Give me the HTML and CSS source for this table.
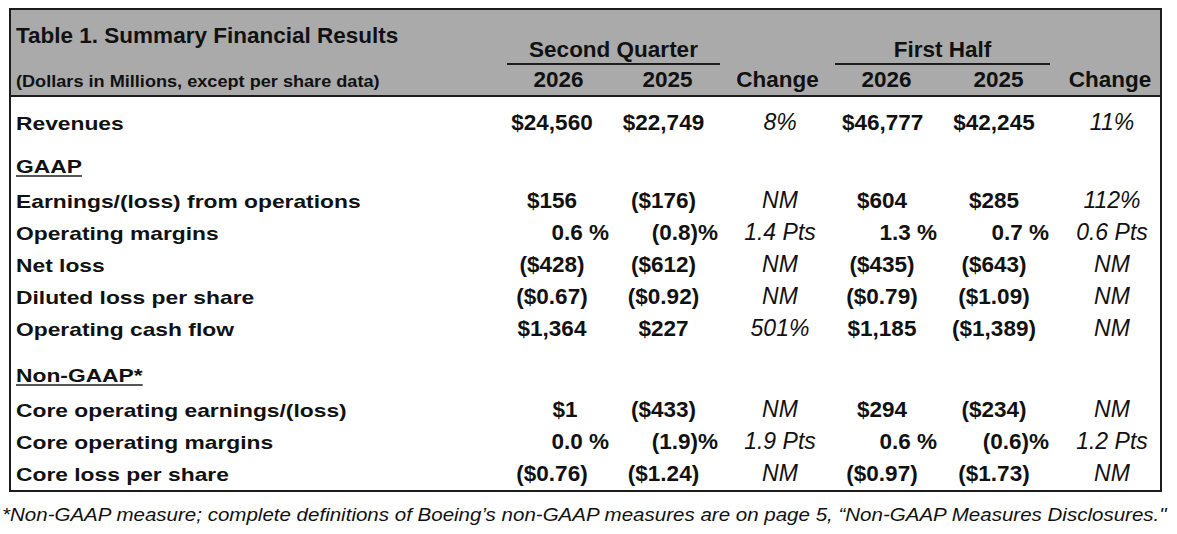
FILE: index.html
```html
<!DOCTYPE html>
<html lang="en">
<head>
<meta charset="utf-8">
<title>Table 1. Summary Financial Results</title>
<link rel="stylesheet" href="styles.css">
</head>
<body>
<div class="page">
  <div class="tbl">
    <div class="head">
      <div class="hrow1">
        <div class="title">Table 1. Summary Financial Results</div>
        <div class="group q">Second Quarter</div>
        <div class="group h">First Half</div>
      </div>
      <div class="hrow2">
        <div class="sub"><span class="stretch-s">(Dollars in Millions, except per share data)</span></div>
        <div>2026</div>
        <div>2025</div>
        <div>Change</div>
        <div>2026</div>
        <div>2025</div>
        <div>Change</div>
      </div>
    </div>
    <div class="body">
      <div class="r first">
        <div class="lbl"><span class="stretch">Revenues</span></div>
        <div class="v">$24,560</div><div class="v">$22,749</div><div class="c">8%</div>
        <div class="v">$46,777</div><div class="v">$42,245</div><div class="c">11%</div>
      </div>
      <div class="r sect">
        <div class="lbl"><span class="stretch u">GAAP</span></div>
      </div>
      <div class="r">
        <div class="lbl"><span class="stretch">Earnings/(loss) from operations</span></div>
        <div class="v">$156</div><div class="v">($176)</div><div class="c">NM</div>
        <div class="v">$604</div><div class="v">$285</div><div class="c">112%</div>
      </div>
      <div class="r">
        <div class="lbl"><span class="stretch">Operating margins</span></div>
        <div class="p">0.6 %</div><div class="p">(0.8)%</div><div class="c">1.4 Pts</div>
        <div class="p">1.3 %</div><div class="p">0.7 %</div><div class="c">0.6 Pts</div>
      </div>
      <div class="r">
        <div class="lbl"><span class="stretch">Net loss</span></div>
        <div class="v">($428)</div><div class="v">($612)</div><div class="c">NM</div>
        <div class="v">($435)</div><div class="v">($643)</div><div class="c">NM</div>
      </div>
      <div class="r">
        <div class="lbl"><span class="stretch">Diluted loss per share</span></div>
        <div class="v">($0.67)</div><div class="v">($0.92)</div><div class="c">NM</div>
        <div class="v">($0.79)</div><div class="v">($1.09)</div><div class="c">NM</div>
      </div>
      <div class="r">
        <div class="lbl"><span class="stretch">Operating cash flow</span></div>
        <div class="v">$1,364</div><div class="v">$227</div><div class="c">501%</div>
        <div class="v">$1,185</div><div class="v">($1,389)</div><div class="c">NM</div>
      </div>
      <div class="r sect2">
        <div class="lbl"><span class="stretch u">Non-GAAP*</span></div>
      </div>
      <div class="r">
        <div class="lbl"><span class="stretch">Core operating earnings/(loss)</span></div>
        <div class="v one">$1</div><div class="v">($433)</div><div class="c">NM</div>
        <div class="v">$294</div><div class="v">($234)</div><div class="c">NM</div>
      </div>
      <div class="r">
        <div class="lbl"><span class="stretch">Core operating margins</span></div>
        <div class="p">0.0 %</div><div class="p">(1.9)%</div><div class="c">1.9 Pts</div>
        <div class="p">0.6 %</div><div class="p">(0.6)%</div><div class="c">1.2 Pts</div>
      </div>
      <div class="r last">
        <div class="lbl"><span class="stretch">Core loss per share</span></div>
        <div class="v">($0.76)</div><div class="v">($1.24)</div><div class="c">NM</div>
        <div class="v">($0.97)</div><div class="v">($1.73)</div><div class="c">NM</div>
      </div>
    </div>
  </div>
  <p class="note"><span class="stretch-n">*Non-GAAP measure; complete definitions of Boeing’s non-GAAP measures are on page 5, “Non-GAAP Measures Disclosures."</span></p>
</div>
</body>
</html>
```
FILE: styles.css
```css
* { box-sizing: border-box; }
html, body { margin: 0; padding: 0; background: #fff; }
body {
  font-family: "Liberation Sans", Arial, sans-serif;
  color: #111;
}
.page {
  width: 1177px;
  padding-top: 8px;
}
.tbl {
  margin-left: 9px;
  width: 1153px;
  border: 2px solid #1c1c1c;
  --cols: 484px 114px 109px 124px 95px 127px 96px;
}
.head {
  background: #aaaaaa;
  border-bottom: 2px solid #1c1c1c;
}
.hrow1 {
  display: grid;
  grid-template-columns: var(--cols);
  height: 55px;
  font-weight: bold;
}
.title {
  grid-column: 1;
  align-self: start;
  padding: 13px 0 0 5px;
  font-size: 22.5px;
  line-height: 26px;
}
.group {
  align-self: end;
  text-align: center;
  font-size: 22.5px;
  line-height: 26px;
  border-bottom: 2px solid #1c1c1c;
}
.group.q { grid-column: 2 / 4; margin: 0 -2px 0 12px; }
.group.h { grid-column: 5 / 7; margin: 0 14px 0 -7px; }

.hrow2 {
  display: grid;
  grid-template-columns: var(--cols);
  grid-template-rows: 26px;
  align-items: baseline;
  height: 30px;
  padding-top: 2px;
  font-weight: bold;
  font-size: 22.5px;
  line-height: 26px;
  text-align: center;
}
.hrow2 > :nth-child(2) { padding-left: 13px; }
.hrow2 > :nth-child(3) { padding-left: 8px; }
.hrow2 > :nth-child(4) { padding-right: 5px; }
.hrow2 > :nth-child(5) { padding-right: 6px; }
.hrow2 > :nth-child(6) { padding-right: 4px; }
.hrow2 > :nth-child(7) { padding-right: 4px; }
.hrow2 > .sub {
  text-align: left;
  padding-left: 5px;
  font-size: 16.8px;
  white-space: nowrap;
}
.stretch-s {
  display: inline-block;
  transform: scaleX(1.08);
  transform-origin: left center;
}

.r {
  display: grid;
  grid-template-columns: var(--cols);
  grid-template-rows: 32px;
  align-items: baseline;
  line-height: 32px;
}
.r.first { padding-top: 9px; }
.r.sect { margin-top: 13px; margin-bottom: 1px; }
.r.sect2 { margin-top: 16px; margin-bottom: 1px; }
.r.last { padding-bottom: 1px; }

.lbl {
  padding-left: 5px;
  font-weight: bold;
  font-size: 19px;
  white-space: nowrap;
}
.stretch {
  display: inline-block;
  transform: scaleX(1.2);
  transform-origin: left center;
}
.u {
  text-decoration: underline;
  text-decoration-thickness: 2px;
  text-underline-offset: 2px;
  text-decoration-color: #555;
}
.v, .p {
  font-weight: bold;
  font-size: 22.5px;
  white-space: nowrap;
}
.v { text-align: center; }
.p { text-align: right; }
.c {
  font-style: italic;
  font-size: 23px;
  text-align: center;
  white-space: nowrap;
}
.r > .v:nth-child(5) { padding-right: 15px; }
.r > .v:nth-child(6) { padding-right: 13px; }
.r > .p:nth-child(6) { padding-right: 15px; }
.r > .v.one { padding-left: 26px; }

.note {
  margin: 12px 0 0 2px;
  font-style: italic;
  font-size: 18px;
  line-height: 22px;
  white-space: nowrap;
}
.stretch-n {
  display: inline-block;
  transform: scaleX(1.14);
  transform-origin: left center;
}
```
